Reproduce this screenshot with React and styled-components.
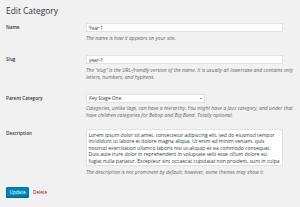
import React from "react";
import styled, { createGlobalStyle } from "styled-components";

const Global = createGlobalStyle`
  html, body { margin: 0; padding: 0; background: #f1f1f1; }
  body { font-family: "Open Sans", "Noto Sans", sans-serif; color: #23282d; width: 300px; height: 207px; overflow: hidden; }
  * { box-sizing: border-box; }
`;

const Page = styled.div`
  padding: 4px 0 0 6px;
`;

const Title = styled.h1`
  margin: 0;
  font-size: 8.4px;
  line-height: 13px;
  font-weight: 400;
  color: #32373c;
`;

const Row = styled.div`
  display: grid;
  grid-template-columns: 80px 208px;
  padding: ${(p) => p.$pt ?? 6}px 0 ${(p) => p.$pb ?? 7}px;
`;

const Label = styled.label`
  font-size: 4.7px;
  font-weight: 600;
  line-height: 9px;
  color: #32373c;
`;

const Field = styled.div`
  display: flex;
  flex-direction: column;
`;

const Input = styled.input`
  width: 197px;
  height: 9px;
  margin: 0;
  padding: 0 2px;
  border: 1px solid #e2e2e2;
  background: #fff;
  font-family: inherit;
  font-size: 4.8px;
  color: #32373c;
  outline: none;
`;

const SelectBox = styled.div`
  position: relative;
  width: 119px;
  height: 9px;
  padding: 0 2px;
  border: 1px solid #e2e2e2;
  background: #fff;
  font-size: 4.8px;
  line-height: 7px;
  color: #32373c;
  display: flex;
  align-items: center;
`;

const Caret = styled.span`
  position: absolute;
  right: 2px;
  top: 3px;
  width: 0;
  height: 0;
  border-left: 1.3px solid transparent;
  border-right: 1.3px solid transparent;
  border-top: 1.6px solid #444;
`;

const Desc = styled.p`
  margin: ${(p) => p.$mt ?? 3}px 0 0;
  font-size: 5.05px;
  line-height: 7px;
  font-style: italic;
  color: #666;
`;

const TextArea = styled.textarea`
  width: 197px;
  height: 37px;
  margin: 0;
  padding: 1.5px 1.5px;
  border: 1px solid #e2e2e2;
  background: #fff;
  font-family: inherit;
  font-size: 5px;
  line-height: 6.6px;
  color: #32373c;
  resize: none;
  outline: none;
  white-space: pre;
  overflow-x: hidden;
  overflow-y: scroll;
  &::-webkit-scrollbar { width: 6px; }
  &::-webkit-scrollbar-track { background: #f4f4f4; }
  &::-webkit-scrollbar-thumb { background: #c8c8c8; border: 1px solid #f4f4f4; }
`;

const Actions = styled.div`
  display: flex;
  align-items: center;
  gap: 4px;
  margin-top: 11px;
`;

const Button = styled.button`
  height: 10px;
  width: 23px;
  padding: 0;
  border: 1px solid #0073aa;
  border-radius: 1px;
  background: #0085ba;
  color: #fff;
  font-family: inherit;
  font-size: 4.7px;
  line-height: 8px;
  box-shadow: 0 1px 0 #006799;
`;

const DeleteLink = styled.a`
  font-size: 4.7px;
  color: #a00;
  text-decoration: none;
`;

const lorem = [
  "Lorem ipsum dolor sit amet, consectetur adipiscing elit, sed do eiusmod tempor",
  "incididunt ut labore et dolore magna aliqua. Ut enim ad minim veniam, quis",
  "nostrud exercitation ullamco laboris nisi ut aliquip ex ea commodo consequat.",
  "Duis aute irure dolor in reprehenderit in voluptate velit esse cillum dolore eu",
  "fugiat nulla pariatur. Excepteur sint occaecat cupidatat non proident, sunt in culpa",
  "qui officia deserunt mollit anim id est laborum.",
  "",
  "Lorem ipsum dolor sit amet, consectetur adipiscing elit, sed do eiusmod tempor",
  "incididunt ut labore et dolore magna aliqua.",
].join("\n");

export default function App() {
  return (
    <>
      <Global />
      <Page>
        <Title>Edit Category</Title>
        <Row>
          <Label>Name</Label>
          <Field>
            <Input defaultValue="Year 1" />
            <Desc>The name is how it appears on your site.</Desc>
          </Field>
        </Row>
        <Row>
          <Label>Slug</Label>
          <Field>
            <Input defaultValue="year-1" />
            <Desc>
              The “slug” is the URL-friendly version of the name. It is usually all lowercase and contains only
              letters, numbers, and hyphens.
            </Desc>
          </Field>
        </Row>
        <Row $pb={5}>
          <Label>Parent Category</Label>
          <Field>
            <SelectBox>
              Key Stage One
              <Caret />
            </SelectBox>
            <Desc $mt={2}>
              Categories, unlike tags, can have a hierarchy. You might have a Jazz category, and under that
              have children categories for Bebop and Big Band. Totally optional.
            </Desc>
          </Field>
        </Row>
        <Row $pt={5} $pb={0}>
          <Label>Description</Label>
          <Field>
            <TextArea defaultValue={lorem} wrap="off" />
            <Desc>The description is not prominent by default; however, some themes may show it.</Desc>
          </Field>
        </Row>
        <Actions>
          <Button>Update</Button>
          <DeleteLink href="#">Delete</DeleteLink>
        </Actions>
      </Page>
    </>
  );
}
